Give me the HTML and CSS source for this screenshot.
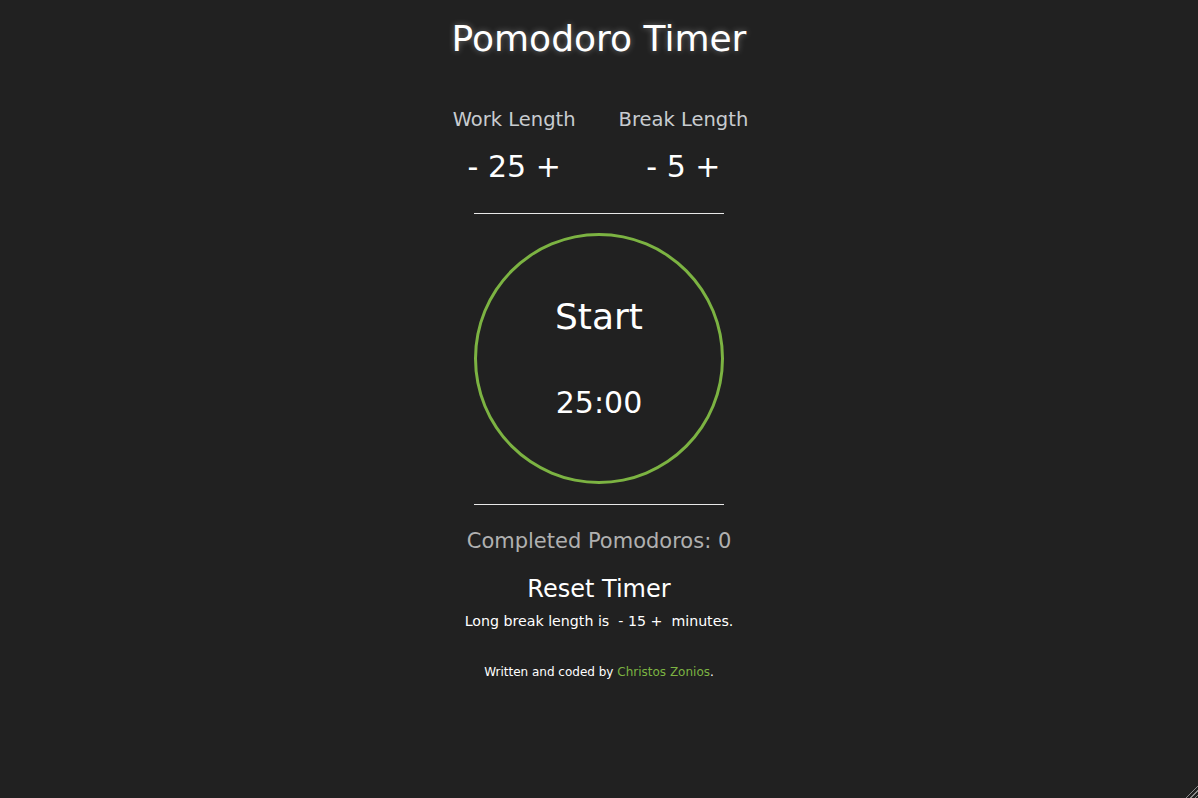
FILE: index.html
```html
<!DOCTYPE html>
<html lang="en">
<head>
<meta charset="utf-8">
<title>Pomodoro Timer</title>
<link rel="stylesheet" href="styles.css">
</head>
<body>
<main class="app">
  <h1 class="title">Pomodoro Timer</h1>
  <div class="settings">
    <div class="setting">
      <div class="setting-label">Work Length</div>
      <div class="setting-value"><span class="btn">-</span> <span>25</span> <span class="btn">+</span></div>
    </div>
    <div class="setting">
      <div class="setting-label">Break Length</div>
      <div class="setting-value"><span class="btn">-</span> <span>5</span> <span class="btn">+</span></div>
    </div>
  </div>
  <hr class="rule">
  <div class="clock">
    <div class="clock-state">Start</div>
    <div class="clock-time">25:00</div>
  </div>
  <hr class="rule">
  <div class="completed">Completed Pomodoros: 0</div>
  <div class="reset">Reset Timer</div>
  <div class="long-break">Long break length is &nbsp;<span class="btn">-</span> 15 <span class="btn">+</span>&nbsp; minutes.</div>
  <footer class="credits">Written and coded by <a class="link" href="#">Christos Zonios</a>.</footer>
</main>
<div class="resize-grip"></div>
</body>
</html>
```
FILE: styles.css
```css
html, body {
  margin: 0;
  padding: 0;
  height: 100%;
}
body {
  background: #212121;
  color: #fff;
  font-family: "DejaVu Sans", Verdana, sans-serif;
  overflow: hidden;
}
.app {
  display: flex;
  flex-direction: column;
  align-items: center;
  text-align: center;
}
.title {
  margin: 17px 0 0;
  font-size: 36px;
  font-weight: normal;
  line-height: 44px;
  text-shadow: 0 0 6px rgba(255, 255, 255, 0.35);
}
.settings {
  display: flex;
  gap: 43px;
  margin-top: 47px;
  margin-left: 3px;
}
.setting {
  display: flex;
  flex-direction: column;
  align-items: center;
}
.setting-label {
  font-size: 19.5px;
  line-height: 24px;
  color: #c8ccd0;
}
.setting-value {
  font-size: 30px;
  line-height: 38px;
  margin-top: 16px;
  white-space: pre;
}
.rule {
  width: 250px;
  border: 0;
  border-top: 1px solid #e8e8e8;
  margin: 0;
}
.settings + .rule {
  margin-top: 27px;
}
.clock {
  box-sizing: border-box;
  width: 250px;
  height: 251px;
  margin-top: 19px;
  border: 3px solid #7cb342;
  border-radius: 50%;
  display: flex;
  flex-direction: column;
  align-items: center;
}
.clock-state {
  font-size: 36px;
  line-height: 44px;
  margin-top: 59px;
}
.clock-time {
  font-size: 30px;
  line-height: 36px;
  margin-top: 46px;
}
.clock + .rule {
  margin-top: 20px;
}
.completed {
  margin-top: 23px;
  font-size: 21px;
  line-height: 26px;
  color: #b0b0b0;
}
.reset {
  margin-top: 20px;
  font-size: 24px;
  line-height: 30px;
}
.long-break {
  margin-top: 7px;
  font-size: 14.2px;
  line-height: 20px;
}
.credits {
  margin-top: 33px;
  font-size: 12px;
  line-height: 16px;
}
.link {
  color: #7cb342;
  text-decoration: none;
}
.resize-grip {
  position: fixed;
  right: 0;
  bottom: 0;
  width: 14px;
  height: 14px;
  background: repeating-linear-gradient(135deg, transparent 0 2px, #8a8a8a 2px 3px);
  clip-path: polygon(100% 0, 100% 100%, 0 100%);
}
```
